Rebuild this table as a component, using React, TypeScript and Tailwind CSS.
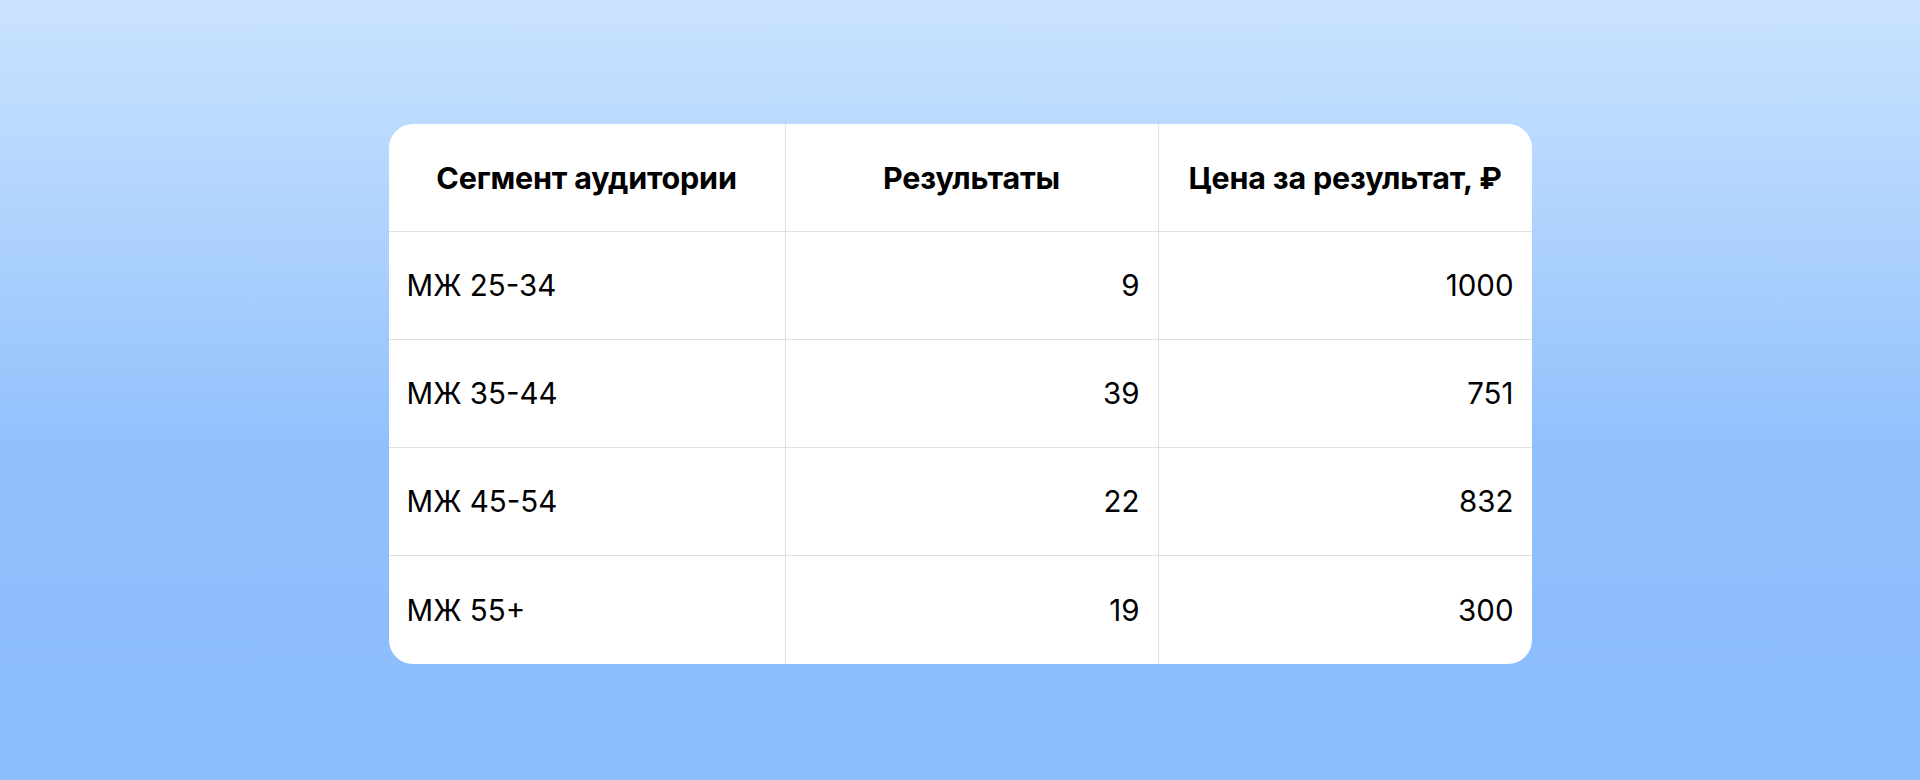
const rows = [
  { segment: "МЖ 25-34", results: "9", price: "1000" },
  { segment: "МЖ 35-44", results: "39", price: "751" },
  { segment: "МЖ 45-54", results: "22", price: "832" },
  { segment: "МЖ 55+", results: "19", price: "300" },
];

export default function App() {
  return (
    <div
      className="w-[1920px] h-[780px] flex justify-center pt-[124px] bg-[linear-gradient(to_bottom,#cae3ff_0%,#a9cffd_35%,#90c0fd_58%,#8bbcfc_100%)]"
      style={{ fontFamily: "Inter, 'Noto Sans', sans-serif" }}
    >
      <div className="w-[1143px] h-[540px] bg-white rounded-[24px] overflow-hidden grid grid-cols-[397px_373px_373px] grid-rows-[repeat(5,108px)] text-black">
        <div className="flex items-center justify-center border-r border-b border-[#e0e0e0] text-[30.5px] font-bold tracking-[-0.2px]">
          Сегмент аудитории
        </div>
        <div className="flex items-center justify-center border-r border-b border-[#e0e0e0] text-[30.5px] font-bold tracking-[-0.2px]">
          Результаты
        </div>
        <div className="flex items-center justify-center border-b border-[#e0e0e0] text-[30.5px] font-bold tracking-[-0.2px]">
          Цена за результат, ₽
        </div>
        {rows.map((r, i) => {
          const last = i === rows.length - 1;
          return (
            <>
              <div
                key={r.segment + "a"}
                className={`flex items-center px-[18px] border-r border-[#e0e0e0] text-[29.5px] ${last ? "" : "border-b"}`}
              >
                {r.segment}
              </div>
              <div
                key={r.segment + "b"}
                className={`flex items-center justify-end px-[18px] border-r border-[#e0e0e0] text-[29.5px] ${last ? "" : "border-b"}`}
              >
                {r.results}
              </div>
              <div
                key={r.segment + "c"}
                className={`flex items-center justify-end px-[18px] border-[#e0e0e0] text-[29.5px] ${last ? "" : "border-b"}`}
              >
                {r.price}
              </div>
            </>
          );
        })}
      </div>
    </div>
  );
}
